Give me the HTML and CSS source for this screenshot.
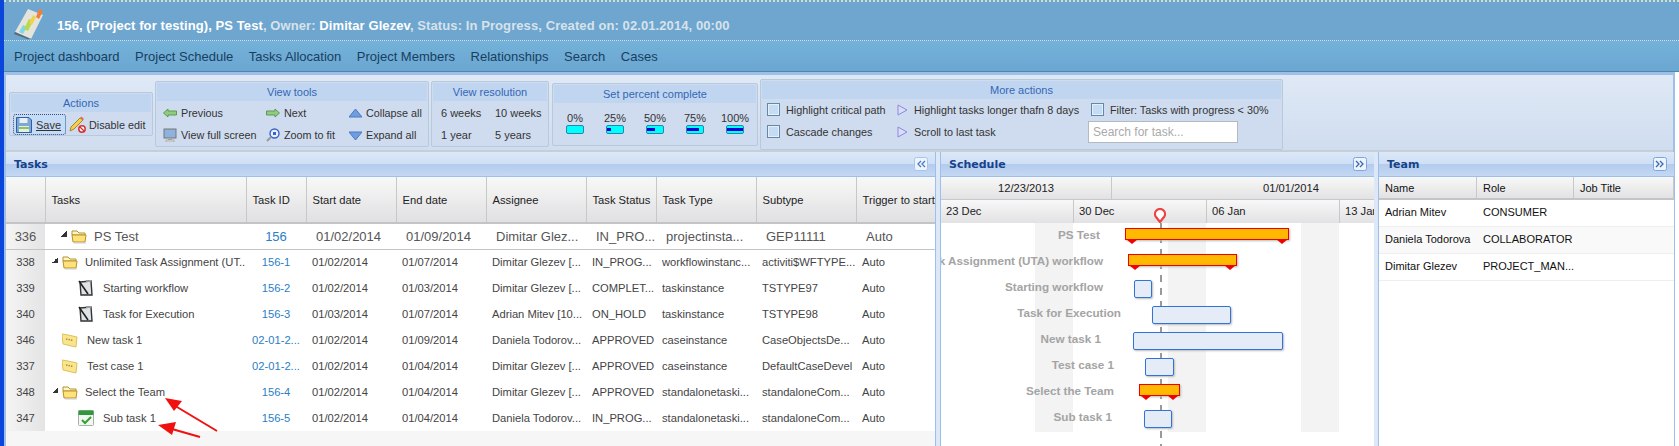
FILE: index.html
```html
<!DOCTYPE html>
<html lang="en">
<head>
    <meta charset="UTF-8">
    <title>Project Schedule</title>
    <link rel="stylesheet" href="styles.css">
</head>
<body>
    <svg class="defs" width="0" height="0">
        <symbol id="folder" viewBox="0 0 16 16">
            <path d="M1 5 L1 3 L6 3 L8 5 L14 5 L14 7 L1 7 Z" fill="#fff6c8" stroke="#b8902c"/>
            <path d="M1 7 L15 7 L14 14 L2 14 Z" fill="#ffe27a" stroke="#b8902c"/>
            <path d="M3 15 L15 15" stroke="#ccc"/>
        </symbol>
        <symbol id="tasknote" viewBox="0 0 16 16">
            <path d="M2 2 L13 1 L14 15 L3 15 Z" fill="#dfe3e6" stroke="#333" stroke-width="1.4"/>
            <path d="M1 1 L10 14" stroke="#222" stroke-width="1.6"/>
            <path d="M8 1 L13 1" stroke="#999" stroke-width="2"/>
        </symbol>
        <symbol id="casefolder" viewBox="0 0 16 16">
            <path d="M0 2 L6 3 L15 5 L14 15 L1 12 Z" fill="#fbe58c" stroke="#dcc15c"/>
            <path d="M4 7 L11 8.5" stroke="#a89540" stroke-width="1.6" stroke-dasharray="1.5 1"/>
        </symbol>
        <symbol id="calcheck" viewBox="0 0 16 16">
            <rect x="0.5" y="0.5" width="15" height="15" rx="1" fill="#f4f6f4" stroke="#a8b0a8"/>
            <rect x="0.5" y="0.5" width="15" height="4.5" fill="#2f9a3c"/>
            <path d="M4 10 L7 13 L13 7" fill="none" stroke="#2da52d" stroke-width="2"/>
        </symbol>
        <symbol id="leftarrow" viewBox="0 0 14 10">
            <path d="M0.5 5 L5 1 L5 3 L13.5 3 L13.5 7 L5 7 L5 9 Z" fill="#8fcc80" stroke="#5c9a52"/>
        </symbol>
        <symbol id="rightarrow" viewBox="0 0 14 10">
            <path d="M13.5 5 L9 1 L9 3 L0.5 3 L0.5 7 L9 7 L9 9 Z" fill="#8fcc80" stroke="#5c9a52"/>
        </symbol>
        <symbol id="purpletri" viewBox="0 0 12 12">
            <path d="M2 1 L11 6 L2 11 Z" fill="#dcdcfa" stroke="#8a8ae0"/>
        </symbol>
        <symbol id="dblleft" viewBox="0 0 14 14">
            <rect x="0.5" y="0.5" width="13" height="13" rx="2" fill="#eef4fc" stroke="#a9c4ea"/>
            <path d="M7 4 L4 7 L7 10 M11 4 L8 7 L11 10" fill="none" stroke="#4a78c0" stroke-width="1.3"/>
        </symbol>
        <symbol id="dblright" viewBox="0 0 14 14">
            <rect x="0.5" y="0.5" width="13" height="13" rx="2" fill="#eef4fc" stroke="#7ea6de"/>
            <path d="M3 4 L6 7 L3 10 M7 4 L10 7 L7 10" fill="none" stroke="#3a68b4" stroke-width="1.3"/>
        </symbol>
    </svg>

    <header class="title-bar">
        <svg class="logo" width="30" height="31" viewBox="0 0 30 31">
            <path d="M1 24 L14 1 L29 7 L17 31 Z" fill="#e4e4dc"/>
            <path d="M1 24 L17 31 L16 32 L0 26 Z" fill="#5d6a74"/>
            <path d="M5 24 L9 17 L13 19 L9 26 Z" fill="#7fd7ea"/>
            <path d="M10 21 L15 11 L19 13 L14 23 Z" fill="#b8d94a"/>
            <path d="M15 15 L19 7 L22 9 L18 17 Z" fill="#eed34c"/>
            <path d="M22 9 L25 1 L29 3 L25 11 Z" fill="#ee8038"/>
        </svg>
        <h1 class="project-title">156, (Project for testing), PS Test<span class="dim">, Owner:</span> Dimitar Glezev<span class="dim">, Status: In Progress, Created on: 02.01.2014, 00:00</span></h1>
    </header>

    <nav class="main-nav">
        <a>Project dashboard</a>
        <a>Project Schedule</a>
        <a>Tasks Allocation</a>
        <a>Project Members</a>
        <a>Relationships</a>
        <a>Search</a>
        <a>Cases</a>
    </nav>

    <main class="main">
        <section class="toolbar">
            <div class="group group-actions">
                <div class="group-title">Actions</div>
                <div class="actions-row">
                    <button class="save-btn">
                        <svg width="16" height="16" viewBox="0 0 16 16">
                            <path d="M0.5 0.5 H13 L15.5 3 V15.5 H0.5 Z" fill="#7ea6d8" stroke="#2f5f9c"/>
                            <rect x="3.5" y="1" width="8" height="5" fill="#e8eef6"/>
                            <rect x="3" y="9" width="10" height="6" fill="#e4f0d8"/>
                            <rect x="3" y="10" width="10" height="2" fill="#8cc070"/>
                        </svg>
                        <u>Save</u>
                    </button>
                    <span class="tool-item">
                        <svg width="17" height="17" viewBox="0 0 17 17">
                            <path d="M1 15 L2 11 L11 2 L14 4 L5 13 Z" fill="#f5cf4a" stroke="#a8842a"/>
                            <path d="M11 2 L12.5 0.5 L15 3 L14 4 Z" fill="#e06a60"/>
                            <circle cx="13" cy="13" r="3.2" fill="#fff" stroke="#d83030" stroke-width="1.5"/>
                            <path d="M11 11 L15 15" stroke="#d83030" stroke-width="1.3"/>
                        </svg>
                        Disable edit
                    </span>
                </div>
            </div>

            <div class="group group-view">
                <div class="group-title">View tools</div>
                <div class="view-grid">
                    <span class="tool-item"><svg width="14" height="10"><use href="#leftarrow"/></svg>Previous</span>
                    <span class="tool-item"><svg width="14" height="10"><use href="#rightarrow"/></svg>Next</span>
                    <span class="tool-item"><svg width="13" height="9" viewBox="0 0 13 9"><path d="M6.5 0 L13 8 L0 8 Z" fill="#6f9ee0" stroke="#4a78c0"/></svg>Collapse all</span>
                    <span class="tool-item"><svg width="14" height="14" viewBox="0 0 14 14"><rect x="1" y="1" width="12" height="9" fill="#8eb2dc" stroke="#777"/><rect x="5" y="10" width="4" height="2" fill="#aaa"/><rect x="3" y="12" width="8" height="2" fill="#ddd" stroke="#888" stroke-width=".5"/></svg>View full screen</span>
                    <span class="tool-item"><svg width="14" height="14" viewBox="0 0 14 14"><circle cx="8.5" cy="5.5" r="4.5" fill="#e8f0fc" stroke="#3a62c8" stroke-width="1.4"/><path d="M5 9 L1 13" stroke="#999" stroke-width="2"/><rect x="7" y="4" width="3" height="3" fill="#3a62c8"/></svg>Zoom to fit</span>
                    <span class="tool-item"><svg width="13" height="9" viewBox="0 0 13 9"><path d="M6.5 9 L13 1 L0 1 Z" fill="#6f9ee0" stroke="#4a78c0"/></svg>Expand all</span>
                </div>
            </div>

            <div class="group group-res">
                <div class="group-title">View resolution</div>
                <div class="res-grid">
                    <span>6 weeks</span><span>10 weeks</span>
                    <span>1 year</span><span>5 years</span>
                </div>
            </div>

            <div class="group group-percent">
                <div class="group-title">Set percent complete</div>
                <div class="percent-row">
                    <div class="percent"><span>0%</span><div class="pbar"></div></div>
                    <div class="percent"><span>25%</span><div class="pbar"><i style="width:25%"></i></div></div>
                    <div class="percent"><span>50%</span><div class="pbar"><i style="width:50%"></i></div></div>
                    <div class="percent"><span>75%</span><div class="pbar"><i style="width:75%"></i></div></div>
                    <div class="percent"><span>100%</span><div class="pbar"><i style="width:100%"></i></div></div>
                </div>
            </div>

            <div class="group group-more">
                <div class="group-title">More actions</div>
                <div class="more-grid">
                    <span class="tool-item"><b class="check"></b>Highlight critical path</span>
                    <span class="tool-item"><svg width="12" height="12"><use href="#purpletri"/></svg>Highlight tasks longer thafn 8 days</span>
                    <span class="tool-item"><b class="check"></b>Filter: Tasks with progress &lt; 30%</span>
                    <span class="tool-item"><b class="check"></b>Cascade changes</span>
                    <span class="tool-item"><svg width="12" height="12"><use href="#purpletri"/></svg>Scroll to last task</span>
                    <input class="task-search" type="text" placeholder="Search for task...">
                </div>
            </div>
        </section>

        <section class="workspace">
            <div class="panel panel-tasks">
                <div class="panel-head"><span>Tasks</span><svg width="14" height="14"><use href="#dblleft"/></svg></div>
                <table class="task-table">
                    <colgroup>
                        <col class="c-num"><col class="c-name"><col class="c-id"><col class="c-date"><col class="c-date">
                        <col class="c-wide"><col class="c-status"><col class="c-wide"><col class="c-wide"><col class="c-trig">
                    </colgroup>
                    <thead>
                        <tr><th></th><th>Tasks</th><th>Task ID</th><th>Start date</th><th>End date</th><th>Assignee</th><th>Task Status</th><th>Task Type</th><th>Subtype</th><th>Trigger to start</th></tr>
                    </thead>
                    <tbody>
                        <tr class="root-row">
                            <td class="num">336</td>
                            <td><div class="tree lvl-root"><i class="tri"></i><svg width="16" height="16"><use href="#folder"/></svg><span>PS Test</span></div></td>
                            <td class="tid">156</td><td>01/02/2014</td><td>01/09/2014</td><td>Dimitar Glez...</td><td>IN_PRO...</td><td>projectinsta...</td><td>GEP11111</td><td>Auto</td>
                        </tr>
                        <tr>
                            <td class="num">338</td>
                            <td><div class="tree lvl-1"><i class="tri"></i><svg width="16" height="16"><use href="#folder"/></svg><span>Unlimited Task Assignment (UT...</span></div></td>
                            <td class="tid">156-1</td><td>01/02/2014</td><td>01/07/2014</td><td>Dimitar Glezev [...</td><td>IN_PROG...</td><td>workflowinstanc...</td><td>activiti$WFTYPE...</td><td>Auto</td>
                        </tr>
                        <tr>
                            <td class="num">339</td>
                            <td><div class="tree lvl-2"><svg width="16" height="16"><use href="#tasknote"/></svg><span>Starting workflow</span></div></td>
                            <td class="tid">156-2</td><td>01/02/2014</td><td>01/03/2014</td><td>Dimitar Glezev [...</td><td>COMPLET...</td><td>taskinstance</td><td>TSTYPE97</td><td>Auto</td>
                        </tr>
                        <tr>
                            <td class="num">340</td>
                            <td><div class="tree lvl-2"><svg width="16" height="16"><use href="#tasknote"/></svg><span>Task for Execution</span></div></td>
                            <td class="tid">156-3</td><td>01/03/2014</td><td>01/07/2014</td><td>Adrian Mitev [10...</td><td>ON_HOLD</td><td>taskinstance</td><td>TSTYPE98</td><td>Auto</td>
                        </tr>
                        <tr>
                            <td class="num">346</td>
                            <td><div class="tree lvl-case"><svg width="16" height="16"><use href="#casefolder"/></svg><span>New task 1</span></div></td>
                            <td class="tid">02-01-2...</td><td>01/02/2014</td><td>01/09/2014</td><td>Daniela Todorov...</td><td>APPROVED</td><td>caseinstance</td><td>CaseObjectsDe...</td><td>Auto</td>
                        </tr>
                        <tr>
                            <td class="num">337</td>
                            <td><div class="tree lvl-case"><svg width="16" height="16"><use href="#casefolder"/></svg><span>Test case 1</span></div></td>
                            <td class="tid">02-01-2...</td><td>01/02/2014</td><td>01/04/2014</td><td>Dimitar Glezev [...</td><td>APPROVED</td><td>caseinstance</td><td>DefaultCaseDevel</td><td>Auto</td>
                        </tr>
                        <tr>
                            <td class="num">348</td>
                            <td><div class="tree lvl-1"><i class="tri"></i><svg width="16" height="16"><use href="#folder"/></svg><span>Select the Team</span></div></td>
                            <td class="tid">156-4</td><td>01/02/2014</td><td>01/04/2014</td><td>Dimitar Glezev [...</td><td>APPROVED</td><td>standalonetaski...</td><td>standaloneCom...</td><td>Auto</td>
                        </tr>
                        <tr>
                            <td class="num">347</td>
                            <td><div class="tree lvl-2"><svg width="16" height="16"><use href="#calcheck"/></svg><span>Sub task 1</span></div></td>
                            <td class="tid">156-5</td><td>01/02/2014</td><td>01/04/2014</td><td>Daniela Todorov...</td><td>IN_PROG...</td><td>standalonetaski...</td><td>standaloneCom...</td><td>Auto</td>
                        </tr>
                    </tbody>
                </table>
                <svg class="red-arrows" width="230" height="60" viewBox="0 0 230 60">
                    <path d="M217 51 L172 24" stroke="#f01010" stroke-width="2"/>
                    <path d="M165 18 L182 21 L174 31 Z" fill="#f01010"/>
                    <path d="M200 57 L165 47" stroke="#f01010" stroke-width="2"/>
                    <path d="M158 45 L176 42 L172 55 Z" fill="#f01010"/>
                </svg>
            </div>

            <div class="panel panel-schedule">
                <div class="panel-head"><span>Schedule</span><svg width="14" height="14"><use href="#dblright"/></svg></div>
                <div class="gantt-head">
                    <div class="gantt-months">
                        <div class="month-a">12/23/2013</div>
                        <div class="month-b">01/01/2014</div>
                    </div>
                    <div class="gantt-weeks">
                        <div>23 Dec</div><div>30 Dec</div><div>06 Jan</div><div>13 Jan</div>
                    </div>
                    <svg class="today-pin" width="12" height="15" viewBox="0 0 12 15">
                        <path d="M6 14 L2 9 A5 5 0 1 1 10 9 Z" fill="#fff" stroke="#f04040" stroke-width="2.2"/>
                    </svg>
                </div>
                <div class="gantt-body">
                    <div class="weekend" style="left:94px"></div>
                    <div class="weekend" style="left:227px"></div>
                    <div class="weekend" style="left:360px"></div>
                    <div class="today-line"></div>

                    <div class="g-label" style="top:0;right:274px">PS Test</div>
                    <div class="g-label" style="top:26px;right:271px">Unlimited Task Assignment (UTA) workflow</div>
                    <div class="g-label" style="top:52px;right:271px">Starting workflow</div>
                    <div class="g-label" style="top:78px;right:253px">Task for Execution</div>
                    <div class="g-label" style="top:104px;right:273px">New task 1</div>
                    <div class="g-label" style="top:130px;right:260px">Test case 1</div>
                    <div class="g-label" style="top:156px;right:260px">Select the Team</div>
                    <div class="g-label" style="top:182px;right:262px">Sub task 1</div>

                    <div class="g-bar summary" style="top:5px;left:184px;width:164px"></div>
                    <div class="g-bar summary" style="top:31px;left:187px;width:109px"></div>
                    <div class="g-bar task" style="top:57px;left:193px;width:18px"></div>
                    <div class="g-bar task" style="top:83px;left:211px;width:79px"></div>
                    <div class="g-bar task" style="top:109px;left:192px;width:150px"></div>
                    <div class="g-bar task" style="top:135px;left:204px;width:29px"></div>
                    <div class="g-bar summary" style="top:161px;left:198px;width:41px"></div>
                    <div class="g-bar task" style="top:187px;left:203px;width:28px"></div>
                </div>
            </div>

            <div class="panel panel-team">
                <div class="panel-head"><span>Team</span><svg width="14" height="14"><use href="#dblright"/></svg></div>
                <div class="team-row team-head"><div>Name</div><div>Role</div><div>Job Title</div></div>
                <div class="team-row"><div>Adrian Mitev</div><div>CONSUMER</div><div></div></div>
                <div class="team-row alt"><div>Daniela Todorova</div><div>COLLABORATOR</div><div></div></div>
                <div class="team-row"><div>Dimitar Glezev</div><div>PROJECT_MAN...</div><div></div></div>
            </div>
        </section>
    </main>
</body>
</html>
```

FILE: styles.css
```css
* {
    box-sizing: border-box;
}
html, body {
    margin: 0;
    height: 446px;
    overflow: hidden;
}
body {
    font-family: "Liberation Sans", Arial, sans-serif;
    font-size: 12px;
    color: #333;
    background: #fff;
    border-left: 4px solid #0b46dc;
    display: flex;
    flex-direction: column;
}
.defs {
    position: absolute;
}

/* title + nav */
.title-bar {
    height: 41px;
    flex: none;
    background: #6ea6cf;
    border-top: 2px dotted #cfe0c8;
    border-bottom: 1px dotted #d4e4f0;
    display: flex;
    padding-left: 10px;
}
.logo {
    margin-top: 6px;
}
.project-title {
    margin: 15px 0 0 13px;
    font-size: 13px;
    line-height: 18px;
    font-weight: bold;
    letter-spacing: 0.09px;
    color: #fff;
}
.project-title .dim {
    color: #d7e2ea;
}
.main-nav {
    height: 31px;
    flex: none;
    background: linear-gradient(#74b2da, #6ba6d0);
    border-bottom: 1px solid #4f86ae;
    display: flex;
    gap: 15.5px;
    padding: 8px 0 0 10px;
    font-size: 13px;
    line-height: 16px;
    color: #17405f;
}
.main {
    flex: 1;
    min-height: 0;
    margin-right: 4px;
    border-top: 3px solid #9dbfe8;
    border-left: 2px solid #9dbfe8;
    border-right: 2px solid #9dbfe8;
    display: flex;
    flex-direction: column;
}

/* toolbar */
.toolbar {
    height: 77px;
    flex: none;
    background: linear-gradient(#dfe9f6, #d0ddef);
    border-bottom: 2px solid #c6ced8;
    display: flex;
    align-items: center;
    gap: 2px;
    padding: 3px 0 0 3px;
}
.group {
    background: #cfdcef;
    border: 1px solid #b8c9de;
    border-radius: 2px;
    padding: 1px;
}
.group-title {
    height: 18px;
    line-height: 18px;
    text-align: center;
    font-size: 11px;
    color: #3566b4;
    background: #c0d6f0;
}
.tool-item {
    display: flex;
    align-items: center;
    gap: 3px;
    font-size: 10.8px;
    white-space: nowrap;
}
.group-actions {
    width: 144px;
    height: 44px;
}
.actions-row {
    display: flex;
    align-items: center;
    gap: 3px;
    padding: 2px 0 0 2px;
}
.save-btn {
    width: 53px;
    height: 21px;
    padding: 0 0 0 2px;
    display: flex;
    align-items: center;
    gap: 4px;
    font: inherit;
    font-size: 11px;
    color: #333;
    background: #c6dbf6;
    border: 1px dotted #27508c;
    border-radius: 3px;
}
.group-view {
    width: 274px;
    height: 66px;
}
.view-grid {
    display: grid;
    grid-template-columns: 103px 83px 1fr;
    grid-auto-rows: 22px;
    padding: 1px 0 0 6px;
}
.view-grid .tool-item {
    gap: 4px;
}
.group-res {
    width: 118px;
    height: 66px;
}
.res-grid {
    display: grid;
    grid-template-columns: 54px 1fr;
    grid-auto-rows: 22px;
    padding: 1px 0 0 8px;
    font-size: 11px;
    align-items: center;
}
.group-percent {
    width: 206px;
    height: 63px;
    margin-left: 1px;
}
.percent-row {
    display: flex;
    padding: 9px 0 0 1px;
}
.percent {
    width: 40px;
    display: flex;
    flex-direction: column;
    align-items: center;
    font-size: 11px;
    line-height: 13px;
}
.pbar {
    width: 18px;
    height: 9px;
    background: #00ffff;
    border: 1px solid #2a86a8;
    border-radius: 2px;
    padding-top: 2px;
}
.pbar i {
    display: block;
    height: 3px;
    background: #0000d8;
}
.group-more {
    width: 523px;
    height: 71px;
}
.more-grid {
    display: grid;
    grid-template-columns: 129px 195px 1fr;
    grid-auto-rows: 22px;
    padding: 0 0 0 5px;
    align-items: center;
}
.more-grid .tool-item {
    gap: 6px;
}
.check {
    width: 13px;
    height: 13px;
    background: #c6dcf4;
    border: 1px solid #5f8aa8;
    box-shadow: inset 0 0 0 1px #e4effa;
}
.task-search {
    width: 150px;
    height: 22px;
    margin-left: -3px;
    padding: 0 4px;
    font: inherit;
    font-size: 12px;
    background: #fff;
    border: 1px solid #b4bac2;
}
.task-search::placeholder {
    color: #aaa;
}

/* panels */
.workspace {
    flex: 1;
    min-height: 0;
    display: flex;
    position: relative;
}
.panel {
    flex: none;
    overflow: hidden;
    background: #fff;
    position: relative;
}
.panel-tasks {
    width: 929px;
    background: #f6f6f6;
}
.panel-schedule {
    width: 433px;
    margin-left: 6px;
    box-shadow: -1px 0 0 0 #9dbfe8, -5px 0 0 0 #dce7f7, -6px 0 0 0 #9dbfe8;
}
.panel-team {
    width: 295px;
    margin-left: 5px;
    box-shadow: -1px 0 0 0 #9dbfe8, -5px 0 0 0 #dce7f7;
}
.panel-head {
    height: 25px;
    display: flex;
    align-items: center;
    justify-content: space-between;
    padding: 0 7px 0 8px;
    background: linear-gradient(#dce8f8, #cfdff5 48%, #b3cbed 50%, #c4d8f3);
    border-bottom: 1px solid #9dbfe8;
    font-family: "DejaVu Sans", sans-serif;
    font-size: 11px;
    font-weight: bold;
    color: #15428b;
}

/* task table */
.task-table {
    width: 929px;
    table-layout: fixed;
    border-collapse: collapse;
    background: #fff;
    font-size: 11.2px;
}
.c-num { width: 39px; }
.c-name { width: 201px; }
.c-id { width: 60px; }
.c-date { width: 90px; }
.c-wide { width: 100px; }
.c-status { width: 70px; }
.c-trig { width: 79px; }
.task-table th {
    height: 46px;
    padding: 0 0 0 6px;
    text-align: left;
    font-weight: normal;
    color: #222;
    white-space: nowrap;
    overflow: hidden;
    background: linear-gradient(#f8f8f8, #e0e0e2);
    border-right: 1px solid #c8c8c8;
    border-bottom: 2px solid #c4c4c4;
}
.task-table td {
    height: 26px;
    padding: 0 0 0 6px;
    color: #444;
    white-space: nowrap;
    overflow: hidden;
}
.task-table .num {
    padding: 0;
    text-align: center;
    background: linear-gradient(90deg, #f4f4f4, #e4e4e4);
}
.task-table .tid {
    text-align: center;
    color: #2a7ec8;
    padding: 0 4px;
}
.root-row td {
    font-size: 13px;
    padding-left: 10px;
    color: #555;
    border-bottom: 1px solid #c4c4c4;
}
.tree {
    display: flex;
    align-items: center;
}
.tree svg {
    flex: none;
}
.tree span {
    margin-left: 7px;
    white-space: nowrap;
}
.tri {
    flex: none;
    width: 6px;
    height: 6px;
    margin-right: 4px;
    margin-top: -4px;
    background: linear-gradient(135deg, transparent 50%, #333 50%);
}
.lvl-root { margin-left: 6px; }
.lvl-1 { margin-left: 1px; }
.lvl-2 { margin-left: 27px; }
.lvl-2 span { margin-left: 9px; }
.lvl-case { margin-left: 11px; }
.lvl-case span { margin-left: 9px; }
.red-arrows {
    position: absolute;
    left: -6px;
    top: 228px;
    pointer-events: none;
}

/* gantt */
.gantt-head {
    height: 46px;
    position: relative;
    border-bottom: 2px solid #c4c4c4;
}
.gantt-months, .gantt-weeks {
    height: 23px;
    display: flex;
    overflow: hidden;
    background: linear-gradient(#f8f8f8, #e2e2e4);
    line-height: 22px;
    color: #222;
    font-size: 11.2px;
}
.gantt-months {
    border-bottom: 1px solid #c8c8c8;
}
.month-a, .month-b {
    flex: none;
    text-align: center;
}
.month-a {
    width: 171px;
    border-right: 1px solid #c8c8c8;
}
.month-b {
    width: 358px;
}
.gantt-weeks div {
    width: 133px;
    flex: none;
    padding-left: 5px;
    border-right: 1px solid #c8c8c8;
}
.today-pin {
    position: absolute;
    left: 213px;
    top: 31px;
}
.gantt-body {
    position: relative;
    height: 223px;
    overflow: hidden;
}
.weekend {
    position: absolute;
    top: 0;
    width: 38px;
    height: 209px;
    background: #f3f3f3;
}
.today-line {
    position: absolute;
    left: 219px;
    top: 0;
    bottom: 0;
    width: 2px;
    background: repeating-linear-gradient(#999 0 7px, transparent 7px 13px);
}
.g-label {
    position: absolute;
    height: 26px;
    line-height: 24px;
    font-size: 11.7px;
    font-weight: bold;
    color: #a4a4a4;
    white-space: nowrap;
}
.g-bar {
    position: absolute;
}
.g-bar.task {
    height: 18px;
    background: #e5ecf7;
    border: 1px solid #2f74d8;
    border-radius: 2px;
    box-shadow: 1px 1px 2px #bbb;
}
.g-bar.summary {
    height: 12px;
    background: #ffb900;
    border: 1px solid #f00000;
    box-shadow: 1px 1px 2px #bbb;
}
.g-bar.summary::before, .g-bar.summary::after {
    content: "";
    position: absolute;
    top: 10px;
    border: 6px solid transparent;
    border-top: 5px solid #f00000;
}
.g-bar.summary::before {
    left: 0;
}
.g-bar.summary::after {
    right: 0;
}

/* team */
.team-row {
    display: grid;
    grid-template-columns: 98px 97px 1fr;
    height: 27px;
    line-height: 24px;
    font-size: 11px;
    color: #111;
    border-bottom: 1px solid #eee;
}
.team-row div {
    padding-left: 6px;
    white-space: nowrap;
}
.team-row.alt {
    background: #f9f9f9;
}
.team-head {
    height: 23px;
    line-height: 22px;
    background: linear-gradient(#f8f8f8, #e2e2e4);
    border-bottom: 2px solid #c4c4c4;
}
.team-head div {
    border-right: 1px solid #c8c8c8;
}
```
